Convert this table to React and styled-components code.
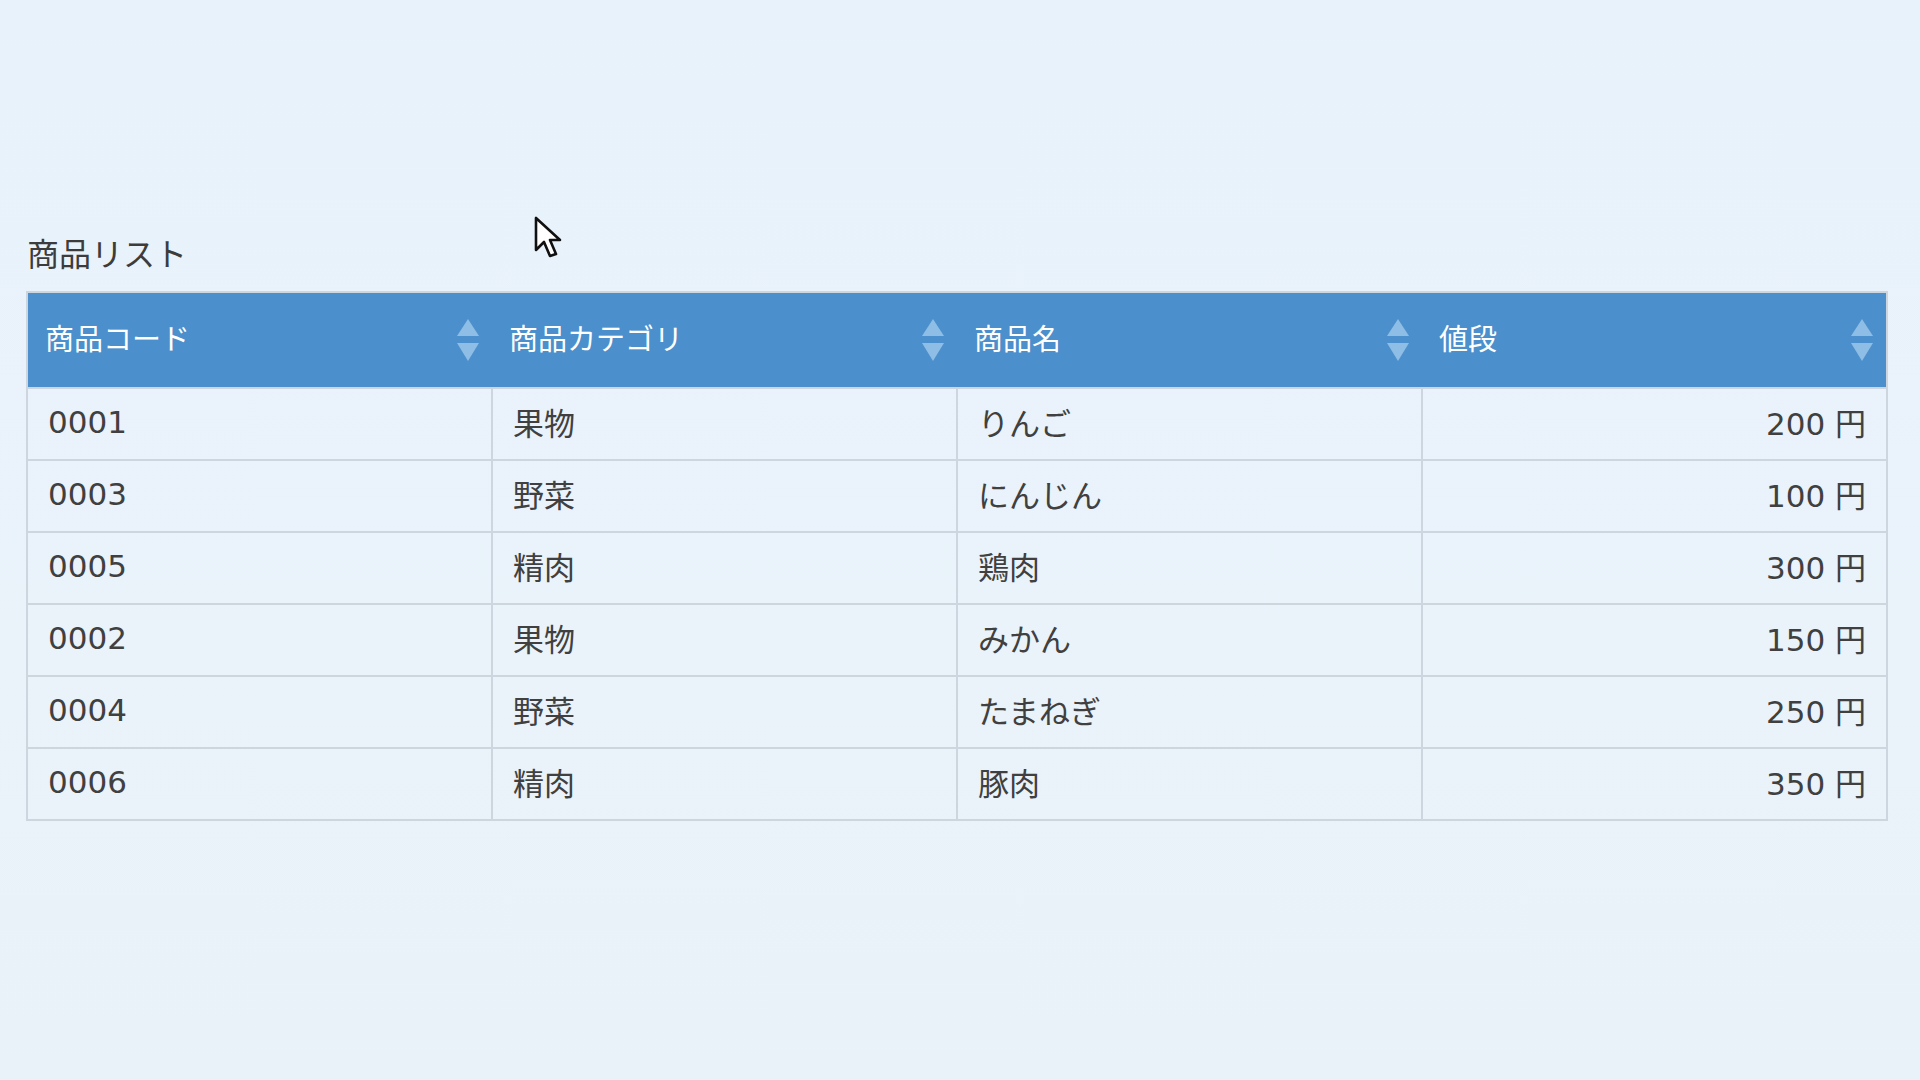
import styled, { createGlobalStyle } from "styled-components";

const GlobalStyle = createGlobalStyle`
  html, body {
    margin: 0;
    padding: 0;
  }
  body {
    background: linear-gradient(180deg, #e8f2fb 0%, #eaf3fa 60%, #e9f2f9 100%);
    font-family: "DejaVu Sans", "Noto Sans CJK JP", sans-serif;
    color: #3a3a3a;
  }
`;

const Page = styled.main`
  position: relative;
  min-height: 100vh;
  box-sizing: border-box;
  padding: 235px 32px 0 26px;
`;

const Title = styled.h2`
  margin: 0 0 16px 1px;
  height: 40px;
  line-height: 40px;
  font-size: 32px;
  font-weight: normal;
  color: #3c3c3c;
`;

const Table = styled.table`
  width: 100%;
  table-layout: fixed;
  border-collapse: collapse;
  border: 2px solid #cdd6de;
`;

const HeadCell = styled.th`
  position: relative;
  height: 96px;
  padding: 0 50px 6px 17px;
  background: #4b8fcc;
  color: #ffffff;
  font-size: 29px;
  font-weight: normal;
  text-align: left;
  box-sizing: border-box;
`;

const SortMark = styled.svg`
  position: absolute;
  right: 13px;
  top: 50%;
  transform: translateY(-50%);
  width: 22px;
  height: 42px;
`;

const Cell = styled.td`
  height: 72px;
  padding: 0 ${(p) => (p.$num ? "20px" : "20px")} 5px;
  border: 2px solid #cdd6de;
  font-size: 31px;
  color: #404040;
  text-align: ${(p) => (p.$num ? "right" : "left")};
  box-sizing: border-box;
  white-space: nowrap;
`;

const Cursor = styled.svg`
  position: absolute;
  left: 534px;
  top: 216px;
  width: 30px;
  height: 46px;
`;

const columns = ["商品コード", "商品カテゴリ", "商品名", "値段"];

const products = [
  { code: "0001", category: "果物", name: "りんご", price: 200 },
  { code: "0003", category: "野菜", name: "にんじん", price: 100 },
  { code: "0005", category: "精肉", name: "鶏肉", price: 300 },
  { code: "0002", category: "果物", name: "みかん", price: 150 },
  { code: "0004", category: "野菜", name: "たまねぎ", price: 250 },
  { code: "0006", category: "精肉", name: "豚肉", price: 350 },
];

const SortIcon = () => (
  <SortMark viewBox="0 0 22 42">
    <path d="M11 0 L22 17 L0 17 Z" fill="#8ebde6" />
    <path d="M0 24 L22 24 L11 42 Z" fill="#8ebde6" />
  </SortMark>
);

const App = () => {
  return (
    <>
      <GlobalStyle />
      <Page>
        <Title>商品リスト</Title>
        <Table>
          <thead>
            <tr>
              {columns.map((col) => (
                <HeadCell key={col}>
                  {col}
                  <SortIcon />
                </HeadCell>
              ))}
            </tr>
          </thead>
          <tbody>
            {products.map((item) => (
              <tr key={item.code}>
                <Cell>{item.code}</Cell>
                <Cell>{item.category}</Cell>
                <Cell>{item.name}</Cell>
                <Cell $num>{item.price} 円</Cell>
              </tr>
            ))}
          </tbody>
        </Table>
        <Cursor viewBox="0 0 15 23">
          <path
            d="M1 1 L1 17 L5 13 L8 20 L11 19 L8 12 L13 12 Z"
            fill="#ffffff"
            stroke="#111111"
            strokeWidth="1.3"
            strokeLinejoin="round"
          />
        </Cursor>
      </Page>
    </>
  );
};

export default App;
